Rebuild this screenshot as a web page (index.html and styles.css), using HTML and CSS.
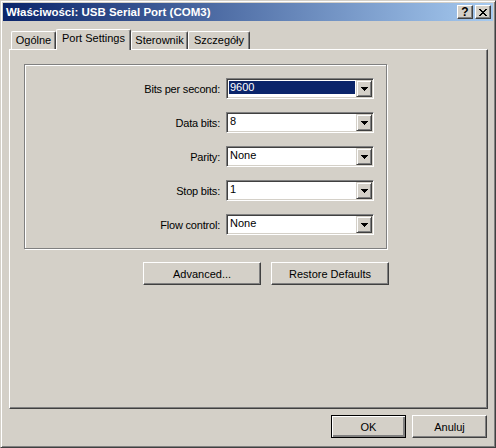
FILE: index.html
```html
<!DOCTYPE html>
<html lang="pl">
<head>
<meta charset="utf-8">
<title>Właściwości: USB Serial Port (COM3)</title>
<link rel="stylesheet" href="styles.css">
</head>
<body>
<div class="window">
  <div class="titlebar">
    <span class="title">Właściwości: USB Serial Port (COM3)</span>
    <div class="caption-buttons">
      <div class="cap-btn help">?</div>
      <div class="cap-btn close">
        <svg width="8" height="7" viewBox="0 0 8 7" shape-rendering="crispEdges"><path d="M0 0h2v1H0zM6 0h2v1H6zM1 1h2v1H1zM5 1h2v1H5zM2 2h4v1H2zM3 3h2v1H3zM2 4h4v1H2zM1 5h2v1H1zM5 5h2v1H5zM0 6h2v1H0zM6 6h2v1H6z" fill="#000"/></svg>
      </div>
    </div>
  </div>
  <div class="body">
    <div class="tabs">
      <div class="tab w1">Ogólne</div>
      <div class="tab selected w2">Port Settings</div>
      <div class="tab w3">Sterownik</div>
      <div class="tab w4">Szczegóły</div>
    </div>
    <div class="panel">
      <div class="group">
        <div class="label">Bits per second:</div>
        <div class="combo"><div class="value"><span class="sel">9600</span></div><div class="drop"><svg width="7" height="4" viewBox="0 0 7 4" shape-rendering="crispEdges"><path d="M0 0h7v1H0zM1 1h5v1H1zM2 2h3v1H2zM3 3h1v1H3z" fill="#000"/></svg></div></div>
        <div class="label">Data bits:</div>
        <div class="combo"><div class="value"><span>8</span></div><div class="drop"><svg width="7" height="4" viewBox="0 0 7 4" shape-rendering="crispEdges"><path d="M0 0h7v1H0zM1 1h5v1H1zM2 2h3v1H2zM3 3h1v1H3z" fill="#000"/></svg></div></div>
        <div class="label">Parity:</div>
        <div class="combo"><div class="value"><span>None</span></div><div class="drop"><svg width="7" height="4" viewBox="0 0 7 4" shape-rendering="crispEdges"><path d="M0 0h7v1H0zM1 1h5v1H1zM2 2h3v1H2zM3 3h1v1H3z" fill="#000"/></svg></div></div>
        <div class="label">Stop bits:</div>
        <div class="combo"><div class="value"><span>1</span></div><div class="drop"><svg width="7" height="4" viewBox="0 0 7 4" shape-rendering="crispEdges"><path d="M0 0h7v1H0zM1 1h5v1H1zM2 2h3v1H2zM3 3h1v1H3z" fill="#000"/></svg></div></div>
        <div class="label">Flow control:</div>
        <div class="combo"><div class="value"><span>None</span></div><div class="drop"><svg width="7" height="4" viewBox="0 0 7 4" shape-rendering="crispEdges"><path d="M0 0h7v1H0zM1 1h5v1H1zM2 2h3v1H2zM3 3h1v1H3z" fill="#000"/></svg></div></div>
      </div>
      <div class="actions">
        <div class="btn wide">Advanced...</div>
        <div class="btn wide">Restore Defaults</div>
      </div>
    </div>
    <div class="footer">
      <div class="btn default">OK</div>
      <div class="btn">Anuluj</div>
    </div>
  </div>
</div>
</body>
</html>
```

FILE: styles.css
```css
* { box-sizing: border-box; }
html, body { margin: 0; padding: 0; background: #D4D0C8; }
body {
  font-family: "Liberation Sans", Arial, sans-serif;
  font-size: 11px;
  color: #000;
}
.window {
  width: 496px;
  height: 448px;
  background: #D4D0C8;
  border: 1px solid;
  border-color: #D4D0C8 #404040 #404040 #D4D0C8;
  box-shadow: inset 1px 1px #fff, inset -1px -1px #808080;
  padding: 2px;
  display: flex;
  flex-direction: column;
}
.titlebar {
  height: 18px;
  background: linear-gradient(to right, #0A246A, #A6CAF0);
  display: flex;
  align-items: center;
  padding-left: 3px;
}
.title {
  color: #fff;
  font-weight: bold;
  font-size: 11.5px;
  flex: 1;
  white-space: nowrap;
}
.caption-buttons {
  display: flex;
  gap: 2px;
  margin-right: 2px;
}
.cap-btn {
  width: 16px;
  height: 14px;
  background: #D4D0C8;
  border: 1px solid;
  border-color: #fff #404040 #404040 #fff;
  box-shadow: inset -1px -1px #808080;
  display: flex;
  align-items: center;
  justify-content: center;
}
.cap-btn.help {
  font-weight: bold;
  font-size: 12px;
  line-height: 12px;
}
.cap-btn.close svg { display: block; }
.body {
  flex: 1;
  padding: 8px 5px 0 6px;
  display: flex;
  flex-direction: column;
}
.tabs {
  display: flex;
  align-items: flex-end;
  height: 20px;
  padding-left: 2px;
}
.tab {
  height: 18px;
  border-top: 1px solid #fff;
  border-left: 1px solid #fff;
  border-right: 1px solid #404040;
  box-shadow: inset -1px 0 #808080;
  border-radius: 2px 2px 0 0;
  display: flex;
  align-items: center;
  justify-content: center;
  padding-bottom: 1px;
  white-space: nowrap;
}
.tab.selected {
  height: 21px;
  margin-bottom: -1px;
  background: #D4D0C8;
  position: relative;
  z-index: 1;
  padding-bottom: 4px;
}
.w1 { width: 45px; }
.w2 { width: 75px; }
.w3 { width: 57px; }
.w4 { width: 62px; }
.panel {
  height: 360px;
  border: 1px solid;
  border-color: #fff #404040 #404040 #fff;
  box-shadow: inset -1px -1px #808080;
  padding: 14px 0 0 14px;
}
.group {
  width: 363px;
  height: 185px;
  border: 1px solid #808080;
  box-shadow: inset 1px 1px #fff, 1px 1px #fff;
  display: grid;
  grid-template-columns: 1fr 148px;
  grid-auto-rows: 21px;
  column-gap: 6px;
  row-gap: 13px;
  padding: 13px 12px 0 0;
}
.label {
  text-align: right;
  align-self: center;
  white-space: nowrap;
  letter-spacing: -0.2px;
}
.combo {
  width: 148px;
  height: 21px;
  background: #fff;
  border: 1px solid;
  border-color: #808080 #fff #fff #808080;
  box-shadow: inset 1px 1px #404040, inset -1px -1px #D4D0C8;
  padding: 1px;
  display: flex;
}
.value {
  flex: 1;
  padding: 1px;
  display: flex;
}
.value span {
  display: block;
  flex: 1;
  height: 13px;
  line-height: 13px;
  padding-left: 1px;
}
.value .sel {
  background: #0A246A;
  color: #fff;
}
.drop {
  width: 16px;
  height: 17px;
  background: #D4D0C8;
  border: 1px solid;
  border-color: #D4D0C8 #404040 #404040 #D4D0C8;
  box-shadow: inset 1px 1px #fff, inset -1px -1px #808080;
  display: flex;
  align-items: center;
  justify-content: center;
}
.drop svg { display: block; }
.actions {
  display: flex;
  gap: 10px;
  margin-top: 13px;
  padding-left: 119px;
}
.btn {
  width: 75px;
  height: 23px;
  background: #D4D0C8;
  border: 1px solid;
  border-color: #fff #404040 #404040 #fff;
  box-shadow: inset -1px -1px #808080;
  display: flex;
  align-items: center;
  justify-content: center;
  white-space: nowrap;
}
.btn.wide { width: 118px; }
.btn.default {
  border-color: #000;
  box-shadow: inset 1px 1px #fff, inset -1px -1px #808080, inset -2px -2px #808080;
}
.footer {
  display: flex;
  justify-content: flex-end;
  gap: 6px;
  margin-top: 6px;
  padding-right: 1px;
}
```
